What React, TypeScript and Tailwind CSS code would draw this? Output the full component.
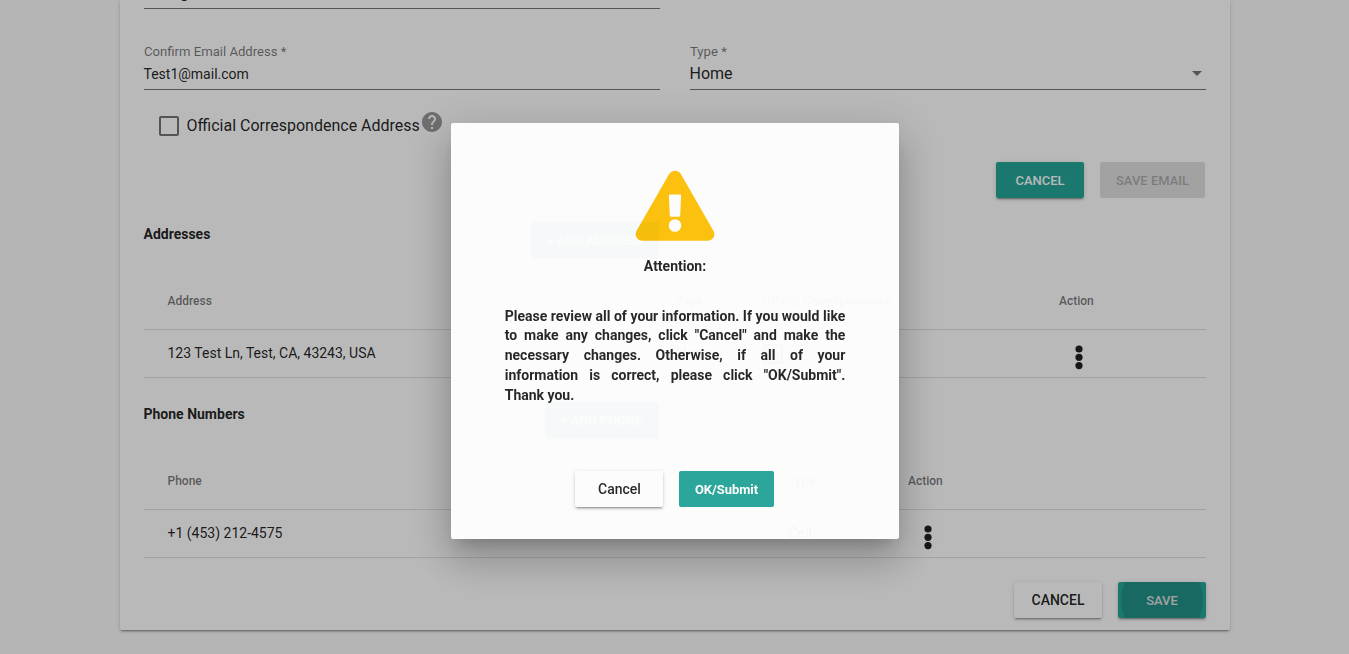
import React from "react";

const raised =
  "shadow-[0_3px_1px_-2px_rgba(0,0,0,0.2),0_2px_2px_0_rgba(0,0,0,0.14),0_1px_5px_0_rgba(0,0,0,0.12)]";

function Dots() {
  return (
    <svg width="8" height="25" viewBox="0 0 8 25" className="block text-black/87" fill="currentColor">
      <circle cx="4" cy="4" r="3.600" />
      <circle cx="4" cy="12.300" r="3.600" />
      <circle cx="4" cy="20.600" r="3.600" />
    </svg>
  );
}

function Warning() {
  return (
    <svg width="80" height="72" viewBox="0 0 80 72" className="block">
      <path
        d="M34 4.200 1.600 60.700C-.9 65.400 2 70.700 7.500 70.700h65c5.500 0 8.400-5.300 5.900-10L46 4.200C43.300-.5 36.700-.5 34 4.200z"
        fill="#ffc107"
      />
      <path d="M35.200 24.500h9.600c.8 0 1.300.5 1.300 1.300l-.9 19.700c0 .8-.6 1.300-1.300 1.300h-7.800c-.7 0-1.300-.5-1.300-1.300l-.9-19.700c0-.8.5-1.300 1.300-1.300z" fill="#fff" />
      <circle cx="40" cy="55.500" r="6.300" fill="#fff" />
    </svg>
  );
}

function AddressesSection() {
  return (
    <section>
      <div className="flex h-11 items-start">
        <h2 className="w-[387px] text-sm leading-5 font-bold">Addresses</h2>
        <button className={`-mt-[2px] h-9 w-32 rounded-[2px] bg-[#26a69a] pt-px text-[13px] font-medium text-white ${raised}`}>
          + ADD ADDRESS
        </button>
      </div>
      <div className="flex h-[62px] items-center border-b border-black/12 px-6 pt-1 text-xs font-medium text-black/54">
        <div className="w-[509px]">Address</div>
        <div className="w-[86px]">Type</div>
        <div className="w-[296.500px]">Official Correspondence</div>
        <div>Action</div>
      </div>
      <div className="flex h-12 items-center border-b border-black/12 px-6 text-sm">
        <div className="w-[509px] pb-[2px]">123 Test Ln, Test, CA, 43243, USA</div>
        <div className="w-[86px] pb-[2px]">Home</div>
        <div className="w-[312px]">
          <div className="size-5 rounded-[2px] border-2 border-black/54" />
        </div>
        <div className="pt-[7px]">
          <Dots />
        </div>
      </div>
    </section>
  );
}

function PhonesSection() {
  return (
    <section>
      <div className="flex h-[70px] items-start pt-[26px]">
        <h2 className="w-[401px] text-sm leading-5 font-bold">Phone Numbers</h2>
        <button className={`-mt-[2px] h-9 w-[114px] rounded-[2px] bg-[#26a69a] pt-px text-[13px] font-medium text-white ${raised}`}>
          + ADD PHONE
        </button>
      </div>
      <div className="flex h-[62px] items-center border-b border-black/12 px-6 pt-1 text-xs font-medium text-black/54">
        <div className="w-[621px]">Phone</div>
        <div className="w-[119.500px]">Type</div>
        <div>Action</div>
      </div>
      <div className="flex h-12 items-center border-b border-black/12 px-6 text-sm">
        <div className="w-[621px] pb-[2px]">+1 (453) 212-4575</div>
        <div className="w-[135px] pb-[2px]">Cell</div>
        <div className="pt-[7px]">
          <Dots />
        </div>
      </div>
    </section>
  );
}

function ConfirmDialog() {
  return (
    <div className="fixed inset-0 flex justify-center bg-black/[0.275] pt-[123px] pl-px">
      <div
        role="dialog"
        className="flex h-[416px] w-[448px] flex-col items-center rounded-[2px] bg-white pt-[47px] opacity-[0.957] shadow-[0_11px_15px_-7px_rgba(0,0,0,0.2),0_24px_38px_3px_rgba(0,0,0,0.14),0_9px_46px_8px_rgba(0,0,0,0.12)]"
      >
        <Warning />
        <h3 className="mt-[14px] text-sm leading-5 font-bold">Attention:</h3>
        <p className="mt-[30.500px] w-[340.600px] text-justify text-sm leading-[19.800px] font-bold">
          Please review all of your information. If you would like to make any changes, click "Cancel" and make the
          necessary changes. Otherwise, if all of your information is correct, please click "OK/Submit". Thank you.
        </p>
        <div className="mt-[65.500px] mr-[2px] flex gap-4">
          <button className={`h-9 w-[88px] rounded-[2px] bg-white pl-[2px] text-sm font-medium ${raised}`}>Cancel</button>
          <button className="h-9 w-[95px] rounded-[2px] bg-[#26a69a] pt-[2px] pl-px text-[12.900px] font-bold text-white">
            OK/Submit
          </button>
        </div>
      </div>
    </div>
  );
}

export default function App() {
  return (
    <div className="h-[654px] overflow-hidden bg-[#fafafa] font-[Roboto,sans-serif] text-black/87">
      <main className={`mx-auto h-[630px] w-[1110px] rounded-b-[2px] bg-white px-6 ${raised}`}>
        <div className="flex h-[9px] w-[516px] items-end border-b border-black/54 pb-[7px] text-sm leading-4">
          Test1@mail.com
        </div>
        <div className="flex gap-[30px]">
          <label className="flex h-[81px] w-[516px] flex-col border-b border-black/54 pt-[35px]">
            <span className="pl-[0.500px] text-[13.125px] leading-4 text-black/54">Confirm Email Address *</span>
            <span className="mt-[6px] text-sm leading-4">Test1@mail.com</span>
          </label>
          <label className="flex h-[81px] w-[516px] flex-col border-b border-black/54 pt-[35px]">
            <span className="pl-[0.500px] text-[13.125px] leading-4 text-black/54">Type *</span>
            <span className="mt-[5px] flex items-center justify-between pr-1 text-base leading-[18px]">
              Home
              <svg width="10" height="5" viewBox="0 0 10 5" className="-mt-[2px] text-black/54">
                <path d="M0 0h10L5 5z" fill="currentColor" />
              </svg>
            </span>
          </label>
        </div>
        <div className="flex h-[72px] items-start pt-[22px] pl-[15px]">
          <span className="mt-1 size-5 rounded-[2px] border-2 border-black/54" />
          <span className="ml-2 pt-[2px] text-base">Official Correspondence Address</span>
          <svg width="24" height="24" viewBox="0 0 24 24" className="-mt-[2px] text-black/40" fill="currentColor">
            <path d="M12 2C6.480 2 2 6.480 2 12s4.480 10 10 10 10-4.480 10-10S17.520 2 12 2zm1 17h-2v-2h2v2zm2.070-7.750-.9.920C13.450 12.900 13 13.500 13 15h-2v-.5c0-1.100.45-2.100 1.170-2.830l1.240-1.260c.37-.36.590-.86.590-1.410 0-1.100-.9-2-2-2s-2 .9-2 2H8c0-2.210 1.790-4 4-4s4 1.790 4 4c0 .88-.36 1.680-.93 2.250z" />
          </svg>
        </div>
        <div className="flex h-[62px] justify-end gap-4 pr-px">
          <button
            className={`h-9 w-[88px] rounded-[2px] bg-[#26a69a] pt-[2px] pl-px text-[13px] font-medium text-white ${raised}`}
          >
            CANCEL
          </button>
          <button className="h-9 w-[105px] rounded-[2px] bg-black/12 pt-[2px] pl-px text-[13px] font-medium text-black/26">
            SAVE EMAIL
          </button>
        </div>
        <AddressesSection />
        <PhonesSection />
        <div className="mt-6 flex justify-end gap-4">
          <button className={`h-9 w-[88px] rounded-[2px] bg-white pl-px text-sm font-medium ${raised}`}>CANCEL</button>
          <button
            className={`relative h-9 w-[88px] overflow-hidden rounded-[2px] bg-[#26a69a] pt-[2px] pl-px text-[13px] font-medium text-white ${raised}`}
          >
            SAVE
            <span className="absolute top-[-23px] left-[3px] size-[82px] rounded-full bg-black/12" />
          </button>
        </div>
      </main>
      <ConfirmDialog />
    </div>
  );
}
